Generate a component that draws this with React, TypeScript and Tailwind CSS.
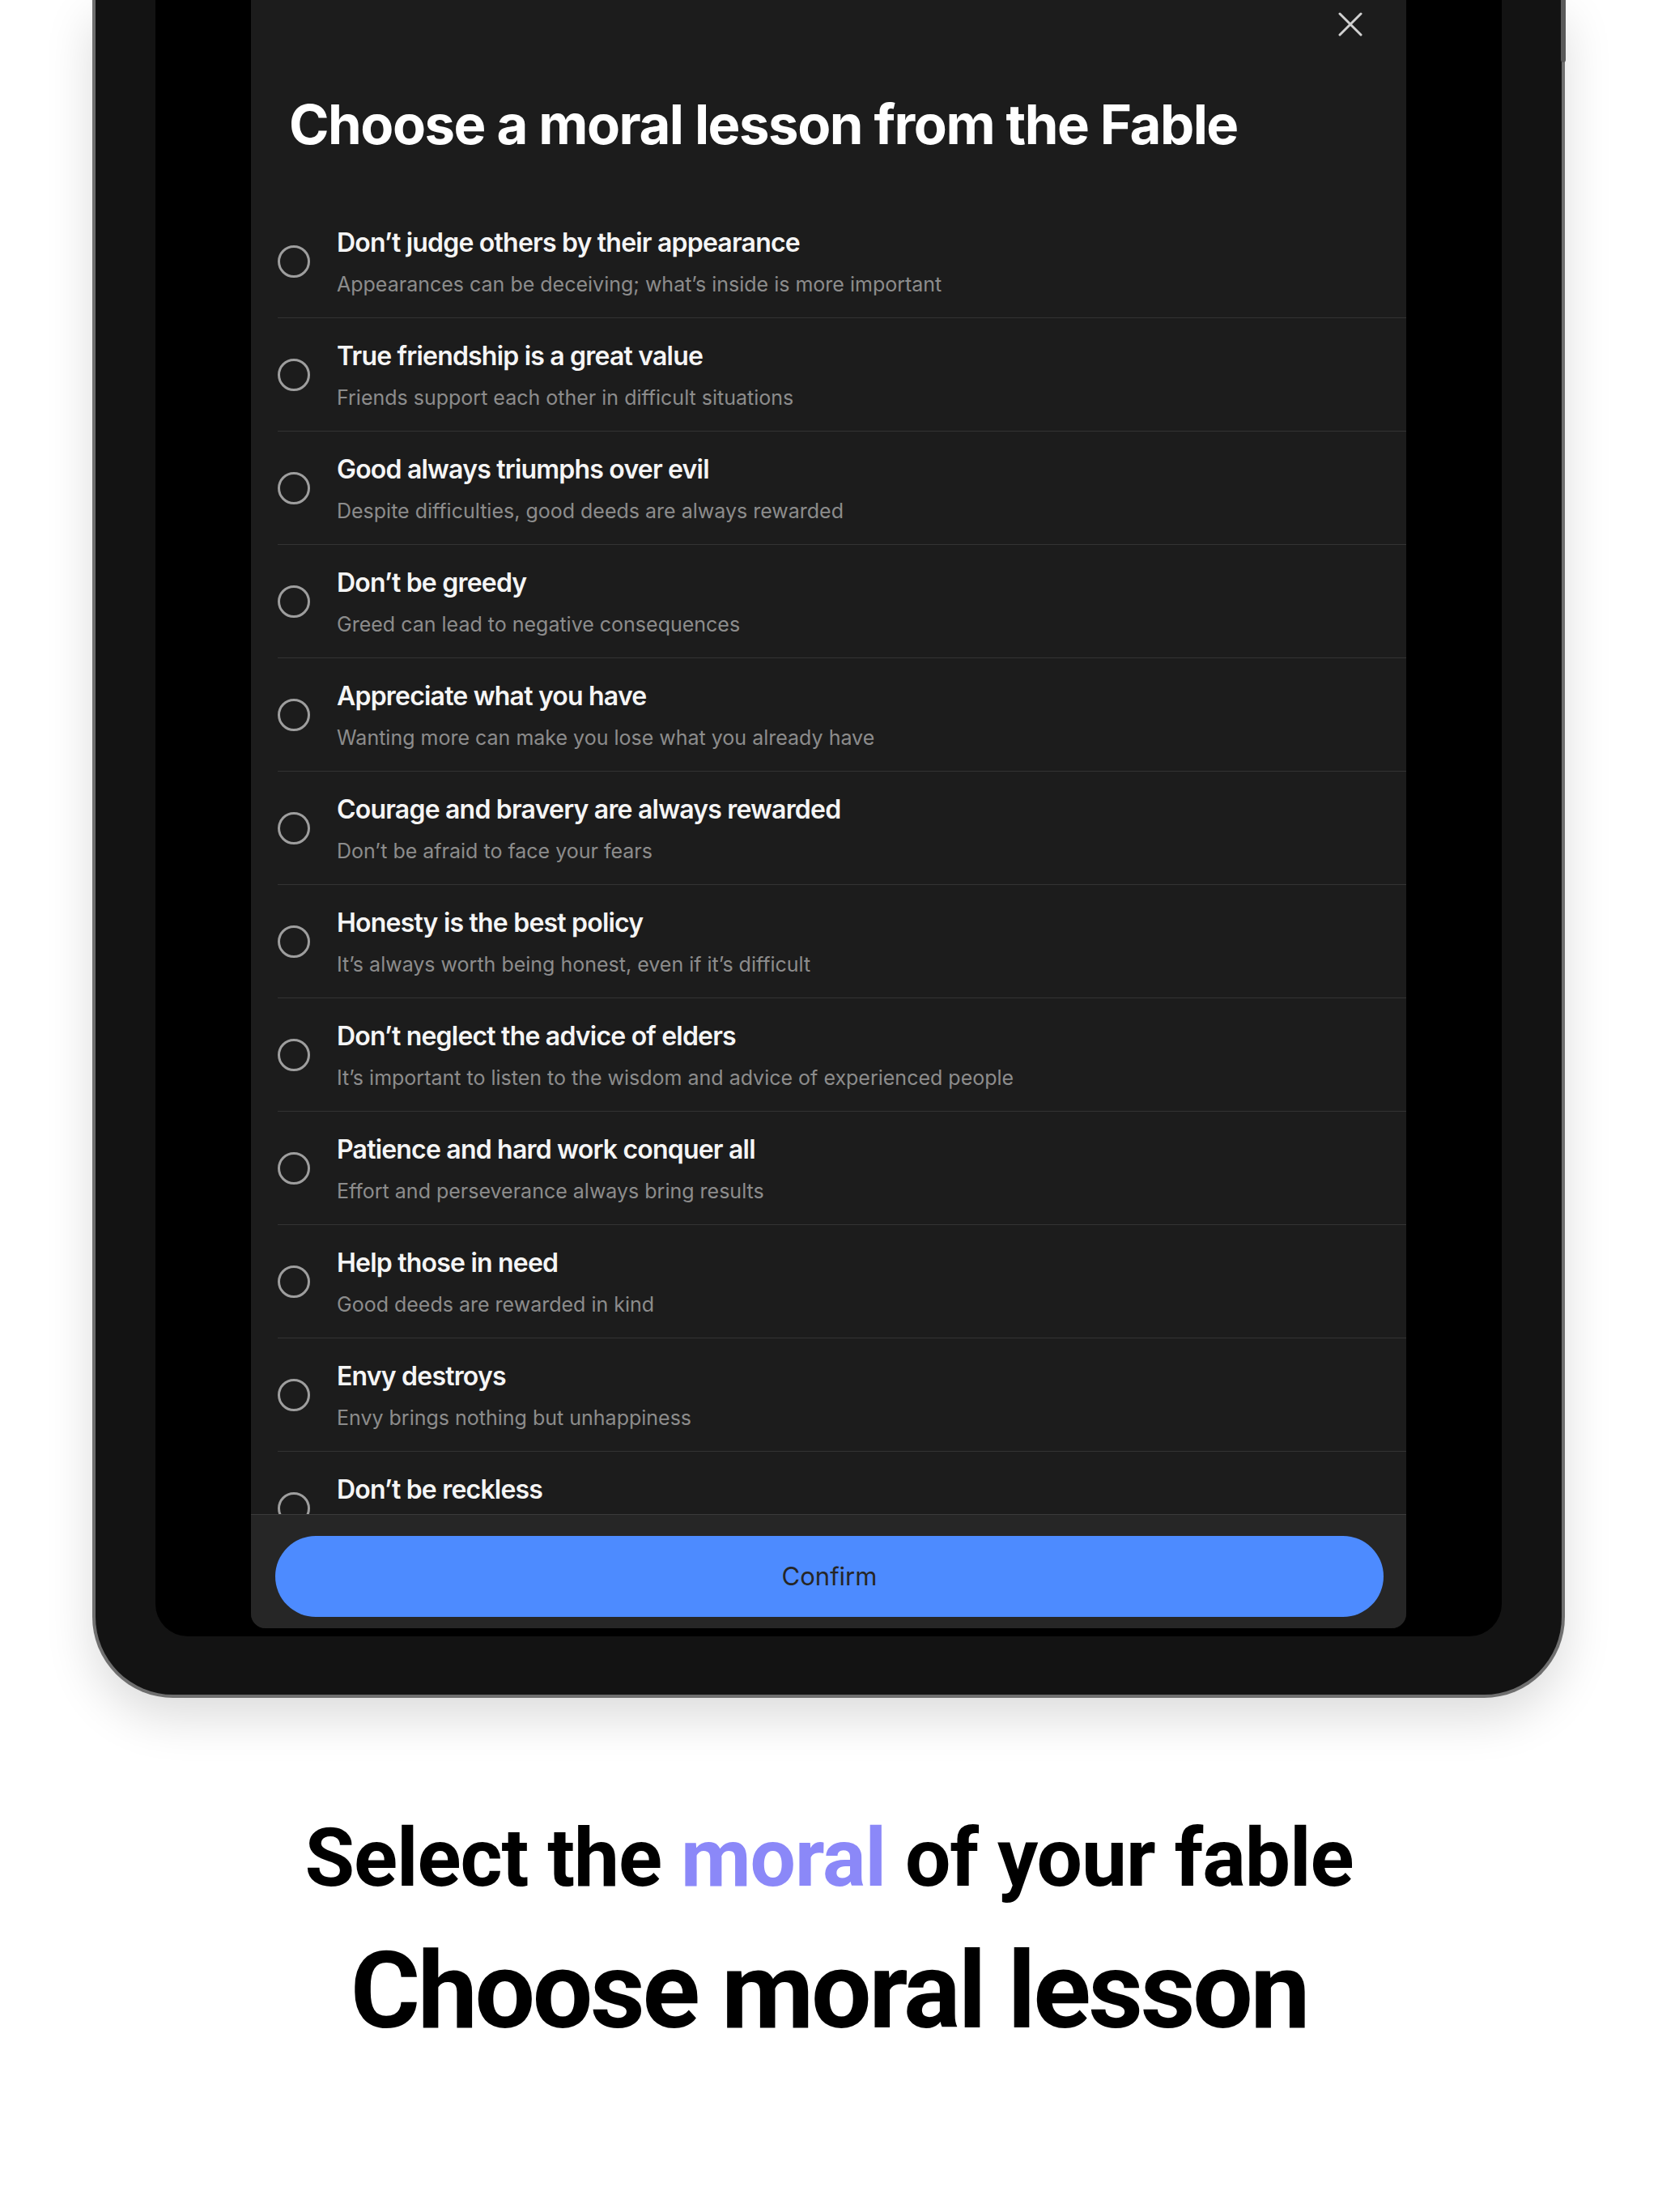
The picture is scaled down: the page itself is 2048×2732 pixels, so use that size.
import { useState } from 'react';

const lessons = [
  { title: 'Don’t judge others by their appearance', text: 'Appearances can be deceiving; what’s inside is more important' },
  { title: 'True friendship is a great value', text: 'Friends support each other in difficult situations' },
  { title: 'Good always triumphs over evil', text: 'Despite difficulties, good deeds are always rewarded' },
  { title: 'Don’t be greedy', text: 'Greed can lead to negative consequences' },
  { title: 'Appreciate what you have', text: 'Wanting more can make you lose what you already have' },
  { title: 'Courage and bravery are always rewarded', text: 'Don’t be afraid to face your fears' },
  { title: 'Honesty is the best policy', text: 'It’s always worth being honest, even if it’s difficult' },
  { title: 'Don’t neglect the advice of elders', text: 'It’s important to listen to the wisdom and advice of experienced people' },
  { title: 'Patience and hard work conquer all', text: 'Effort and perseverance always bring results' },
  { title: 'Help those in need', text: 'Good deeds are rewarded in kind' },
  { title: 'Envy destroys', text: 'Envy brings nothing but unhappiness' },
  { title: 'Don’t be reckless', text: 'Think before you act' },
];

function CloseIcon() {
  return (
    <svg width="30" height="30" viewBox="0 0 30 30" fill="none">
      <path d="M2 2L28 28M28 2L2 28" stroke="#d0d0d0" strokeWidth="3" strokeLinecap="round" />
    </svg>
  );
}

export default function App() {
  const [selected, setSelected] = useState<number | null>(null);

  return (
    <div className="w-[2048px] h-[2732px] bg-white overflow-hidden font-['Inter',sans-serif]">
      {/* device */}
      <div className="relative ml-[114px] w-[1819px] h-[2097px] bg-[#131313] border-x-[4px] border-b-[4px] border-[#6f6f6f] rounded-b-[100px] shadow-[0_24px_60px_rgba(0,0,0,0.14)] px-[74px] pb-[72px]">
        <div className="absolute right-[-5px] top-0 w-[6px] h-[77px] bg-[#5a5a5a] rounded-b-[3px]" />

        <div className="h-full bg-black rounded-b-[40px] px-[118px] pb-[10px]">
          <div className="h-full bg-[#1c1c1c] rounded-b-[18px] flex flex-col overflow-hidden">
            {/* header */}
            <div className="h-[253px] shrink-0 flex flex-col">
              <div className="flex justify-end pt-[15px] pr-[54px]">
                <button className="w-[30px] h-[30px]">
                  <CloseIcon />
                </button>
              </div>
              <h1 className="mt-[75px] pl-[47px] text-[67px] leading-[67px] font-bold text-white tracking-[-0.022em]">
                Choose a moral lesson from the Fable
              </h1>
            </div>

            {/* list */}
            <div className="flex-1 min-h-0 overflow-hidden pl-[33px]">
              {lessons.map((item, i) => (
                <button
                  key={i}
                  onClick={() => setSelected(i)}
                  className="w-full h-[140px] shrink-0 flex items-center gap-[33px] border-b border-[#333333] text-left"
                >
                  <span
                    className={`w-[40px] h-[40px] shrink-0 rounded-full border-[3px] ${
                      selected === i ? 'border-[#4d8bff] bg-[#4d8bff]' : 'border-[#9e9e9e]'
                    }`}
                  />
                  <span className="flex flex-col gap-[15px] pt-[2px]">
                    <span className="text-[32px] leading-[40px] font-semibold text-[#f5f5f5] tracking-[-0.025em]">
                      {item.title}
                    </span>
                    <span className="text-[25px] leading-[32px] text-[#8c8c8c]">{item.text}</span>
                  </span>
                </button>
              ))}
            </div>

            {/* footer */}
            <div className="shrink-0 bg-[#262626] border-t border-[#3a3a3a] pt-[26px] pb-[14px] pl-[30px] pr-[28px]">
              <button className="w-full h-[100px] rounded-full bg-[#4d8bff] text-[31px] text-[#262626]">
                Confirm
              </button>
            </div>
          </div>
        </div>
      </div>

      {/* caption */}
      <div className="mt-[148px] flex flex-col items-center font-['Roboto',sans-serif] font-bold text-black">
        <p className="text-[100px] leading-[100px] tracking-[-0.01em]">
          Select the <span className="text-[#8b88f8]">moral</span> of your fable
        </p>
        <p className="mt-[48px] text-[132px] leading-[132px] tracking-[-0.025em]">Choose moral lesson</p>
      </div>
    </div>
  );
}
